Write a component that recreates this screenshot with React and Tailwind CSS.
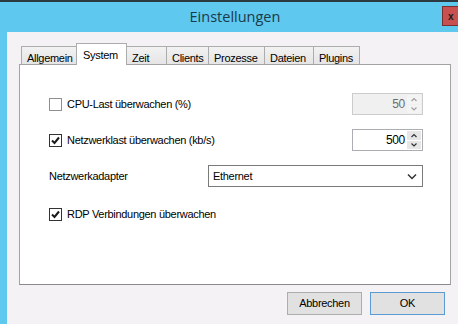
import React, { useState } from "react";

const font = { fontFamily: '"Liberation Sans", Arial, sans-serif' };

const tabs = ["Allgemein", "System", "Zeit", "Clients", "Prozesse", "Dateien", "Plugins"];
const tabWidths = {
  Allgemein: "w-[56px]",
  System: "w-[51px]",
  Zeit: "w-[41px]",
  Clients: "w-[43px]",
  Prozesse: "w-[57px]",
  Dateien: "w-[50px]",
  Plugins: "w-[47px]",
};

// Small classic checkbox
const CheckBox = ({ checked, onChange }) => (
  <button
    onClick={onChange}
    className={`w-[13px] h-[13px] shrink-0 flex items-center justify-center bg-white border ${
      checked ? "border-[#333333]" : "border-[#8f8f8f]"
    }`}
  >
    {checked && (
      <svg width="11" height="11" viewBox="0 0 11 11">
        <path d="M2 5.5 L4.5 8 L9 2.5" fill="none" stroke="#1a1a1a" strokeWidth="2" />
      </svg>
    )}
  </button>
);

// Number box with spin arrows
const SpinBox = ({ value, disabled }) => (
  <div
    className={`w-[71px] h-[22px] flex border ${
      disabled ? "bg-[#f0f0f0] border-[#cccccc]" : "bg-white border-[#abadb3]"
    }`}
  >
    <div
      className={`flex-1 flex items-center justify-end pr-[2px] text-[12px] ${
        disabled ? "text-[#6d6d6d]" : "text-black"
      }`}
    >
      {value}
    </div>
    <div className="w-[15px] flex flex-col gap-[1px] py-[1px] pr-[1px]">
      {["M1.5 5 L4 2.5 L6.5 5", "M1.5 2.5 L4 5 L6.5 2.5"].map((d, i) => (
        <div
          key={i}
          className={`flex-1 flex items-center justify-center ${
            disabled ? "bg-[#f4f4f4]" : "bg-[#e6e6e6]"
          }`}
        >
          <svg width="8" height="7" viewBox="0 0 8 7">
            <path d={d} fill="none" stroke={disabled ? "#a0a0a0" : "#333"} strokeWidth="1.2" />
          </svg>
        </div>
      ))}
    </div>
  </div>
);

export default function App() {
  const [active, setActive] = useState("System");
  const [cpu, setCpu] = useState(false);
  const [net, setNet] = useState(true);
  const [rdp, setRdp] = useState(true);

  return (
    <div className="w-[458px] h-[324px] overflow-hidden flex flex-col bg-[#5ec8ef]" style={font}>
      {/* Top edge */}
      <div className="h-[2px] shrink-0 bg-[#2b3a40]" />

      {/* Title bar */}
      <div className="relative h-[30px] shrink-0 flex items-center justify-center">
        <span
          className="text-[14.5px] text-[#1c3a48] ml-[12px]"
          style={{ fontFamily: '"Open Sans", "Noto Sans", sans-serif' }}
        >
          Einstellungen
        </span>
        <div className="absolute left-[442px] top-[4px] w-[26px] h-[20px] bg-[#c75050] border border-[#7a3030] flex items-center pl-[5px] text-[10px] font-bold text-[#1a1a1a]">
          x
        </div>
      </div>

      <div className="flex-1 flex">
        {/* Left window border */}
        <div className="w-[7px] shrink-0" />

        {/* Dialog body */}
        <div className="w-[451px] shrink-0 bg-[#f5f2f5] flex flex-col pl-[12px] pr-[7px] pt-[11px] text-[11px] tracking-[-0.3px] text-black">
          {/* Tabs */}
          <div className="flex items-end pl-[2px] h-[21px] relative z-10">
            {tabs.map((t, i) => {
              const sel = t === active;
              return (
                <button
                  key={t}
                  onClick={() => setActive(t)}
                  className={`${tabWidths[t]} shrink-0 flex items-start border border-[#acacac] border-b-0 ${
                    i === 0 ? "" : "-ml-[1px]"
                  } ${
                    sel
                      ? "relative z-10 h-[22px] bg-white pt-[3px] pl-[6px] -mb-[1px]"
                      : "h-[18px] pt-[3px] pl-[5px] bg-gradient-to-b from-[#f2f2f2] to-[#e5e5e5]"
                  }`}
                >
                  {t}
                </button>
              );
            })}
          </div>

          {/* Tab panel */}
          <div className="h-[221px] w-[432px] bg-white border border-[#a3a3a3] border-b-[#8a8a8a] flex flex-col pl-[29px] pr-[27px] pt-[28px]">
            <div className="h-[22px] flex items-center">
              <CheckBox checked={cpu} onChange={() => setCpu(!cpu)} />
              <span className="ml-[5px] flex-1">CPU-Last überwachen (%)</span>
              <SpinBox value="50" disabled={!cpu} />
            </div>

            <div className="h-[22px] flex items-center mt-[14px]">
              <CheckBox checked={net} onChange={() => setNet(!net)} />
              <span className="ml-[5px] flex-1">Netzwerklast überwachen (kb/s)</span>
              <SpinBox value="500" disabled={!net} />
            </div>

            <div className="h-[22px] flex items-center mt-[14px]">
              <span className="w-[159px]">Netzwerkadapter</span>
              <div className="flex-1 h-[22px] border border-[#7a7a7a] bg-white flex items-center pl-[4px] pr-[5px]">
                <span className="flex-1">Ethernet</span>
                <svg width="10" height="7" viewBox="0 0 10 7">
                  <path d="M1 1.5 L5 5.5 L9 1.5" fill="none" stroke="#333" strokeWidth="1.5" />
                </svg>
              </div>
            </div>

            <div className="h-[22px] flex items-center mt-[16px]">
              <CheckBox checked={rdp} onChange={() => setRdp(!rdp)} />
              <span className="ml-[5px]">RDP Verbindungen überwachen</span>
            </div>
          </div>

          {/* Buttons */}
          <div className="flex justify-end gap-[8px] mt-[7px] mr-[6px]">
            <button className="w-[75px] h-[23px] bg-[#e1e1e1] border border-[#adadad] text-[11px]">
              Abbrechen
            </button>
            <button className="w-[75px] h-[23px] bg-[#e1e1e1] border border-[#5c9bd1] text-[11px]">
              OK
            </button>
          </div>
        </div>
      </div>
    </div>
  );
}
